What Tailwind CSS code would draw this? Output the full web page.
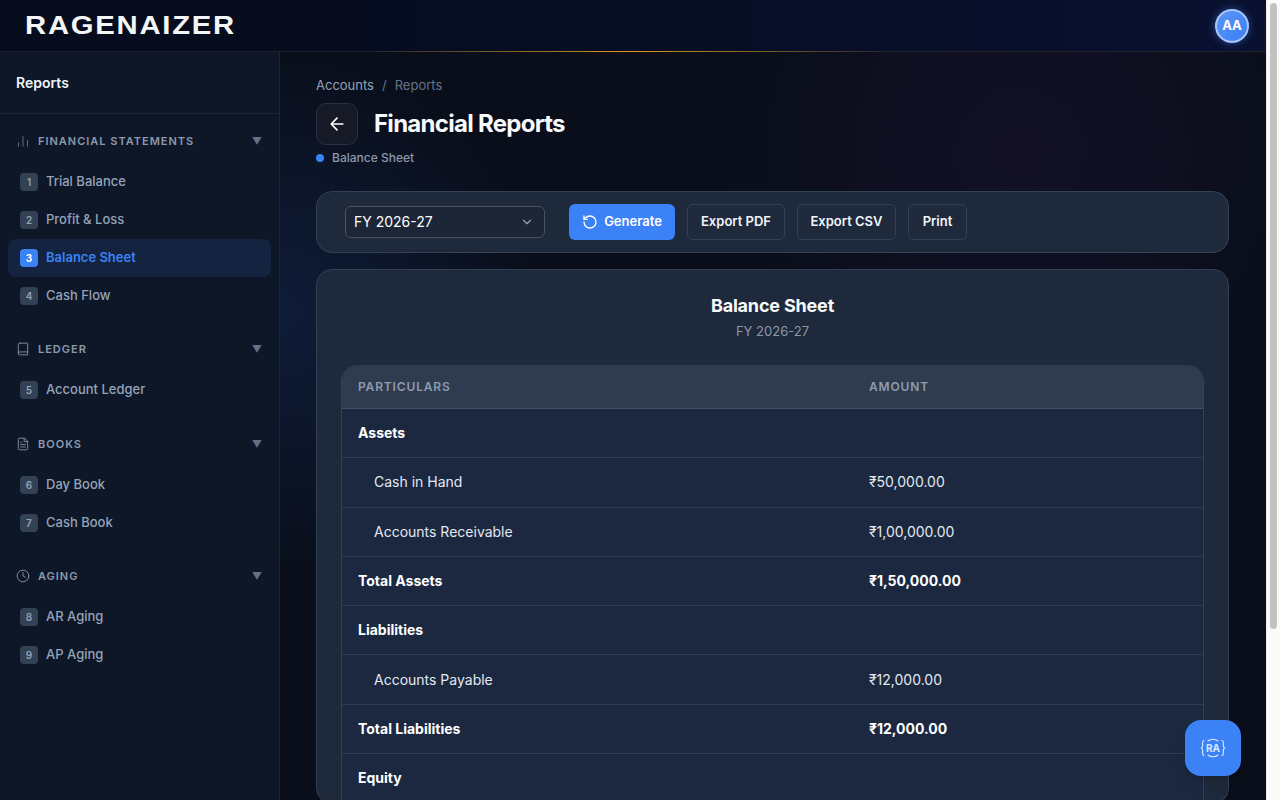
<!DOCTYPE html>
<html lang="en">
<head>
    <meta charset="UTF-8">
    <title>Financial Reports</title>
    <script src="https://cdn.jsdelivr.net/npm/@tailwindcss/browser@4"></script>
</head>
<body class="h-screen overflow-hidden flex bg-white font-['Inter',sans-serif] text-white">

    <div class="relative flex-1 min-w-0 flex flex-col h-screen overflow-hidden bg-[#090e1a]">

        <!-- Top bar -->
        <header class="relative h-[52px] shrink-0 flex items-center justify-between pl-[25px] pr-[25px] border-b border-[#20242f] bg-gradient-to-r from-[#060c1c] via-[#070d22] to-[#0a1030]">
            <span class="font-['Liberation_Sans',sans-serif] font-bold text-[25px] leading-none tracking-[0.06em] scale-x-[1.17] origin-left text-[#f4f5f7]">RAGENAIZER</span>
            <div class="w-[34px] h-[34px] rounded-full bg-gradient-to-br from-[#5b96f7] to-[#3b7ef5] border-2 border-[#a9c6f8] shadow-[0_0_8px_rgba(59,130,246,0.5)] flex items-center justify-center text-[13px] font-bold mr-[-8px]">AA</div>
            <div class="absolute left-[370px] bottom-[-1px] w-[520px] h-px bg-gradient-to-r from-transparent via-[#d99a1e] to-transparent"></div>
        </header>

        <div class="flex-1 flex min-h-0">

            <!-- Sidebar -->
            <aside class="w-[280px] shrink-0 bg-[#0e1728] border-r border-[#1e2636]">
                <div class="h-[62px] flex items-center px-4 text-sm font-semibold text-[#f1f5f9] border-b border-[#1c2537]">Reports</div>

                <nav class="pt-[15px]">
                    <!-- Financial statements -->
                    <div class="h-[24px] flex items-center pl-4 pr-4 text-[11px] font-semibold tracking-[0.09em] text-[#8d99ab]">
                        <svg class="w-[14px] h-[14px] mr-2 text-[#5f6b7d]" viewBox="0 0 14 14" fill="none" stroke="currentColor" stroke-width="1"><path d="M2.5 12.5v-4M7 12.5V2M11.5 12.5V6"/></svg>
                        <span class="flex-1">FINANCIAL STATEMENTS</span>
                        <span class="text-[10px] text-[#64707f]">▼</span>
                    </div>
                    <div class="mt-[10px] px-2 flex flex-col">
                        <a class="h-[38px] flex items-center gap-2 px-3 rounded-lg text-[13px] font-medium text-[#94a3b8]"><span class="w-[18px] h-[18px] rounded-[4px] bg-[#334155] flex items-center justify-center text-[10px] font-semibold">1</span>Trial Balance</a>
                        <a class="h-[38px] flex items-center gap-2 px-3 rounded-lg text-[13px] font-medium text-[#94a3b8]"><span class="w-[18px] h-[18px] rounded-[4px] bg-[#334155] flex items-center justify-center text-[10px] font-semibold">2</span>Profit &amp; Loss</a>
                        <a class="h-[38px] flex items-center gap-2 px-3 rounded-lg text-[13px] font-semibold text-[#3b82f6] bg-[#14233f]"><span class="w-[18px] h-[18px] rounded-[4px] bg-[#3b82f6] text-white flex items-center justify-center text-[10px] font-bold">3</span>Balance Sheet</a>
                        <a class="h-[38px] flex items-center gap-2 px-3 rounded-lg text-[13px] font-medium text-[#94a3b8]"><span class="w-[18px] h-[18px] rounded-[4px] bg-[#334155] flex items-center justify-center text-[10px] font-semibold">4</span>Cash Flow</a>
                    </div>

                    <!-- Ledger -->
                    <div class="mt-[22px] h-[24px] flex items-center pl-4 pr-4 text-[11px] font-semibold tracking-[0.09em] text-[#8d99ab]">
                        <svg class="w-[14px] h-[14px] mr-2 text-[#7d899a]" viewBox="0 0 24 24" fill="none" stroke="currentColor" stroke-width="1.7" stroke-linecap="round" stroke-linejoin="round"><path d="M4 19.5A2.5 2.5 0 0 1 6.5 17H20"/><path d="M6.5 2H20v20H6.5A2.5 2.5 0 0 1 4 19.5v-15A2.5 2.5 0 0 1 6.5 2z"/></svg>
                        <span class="flex-1">LEDGER</span>
                        <span class="text-[10px] text-[#64707f]">▼</span>
                    </div>
                    <div class="mt-[10px] px-2 flex flex-col">
                        <a class="h-[38px] flex items-center gap-2 px-3 rounded-lg text-[13px] font-medium text-[#94a3b8]"><span class="w-[18px] h-[18px] rounded-[4px] bg-[#334155] flex items-center justify-center text-[10px] font-semibold">5</span>Account Ledger</a>
                    </div>

                    <!-- Books -->
                    <div class="mt-[23px] h-[24px] flex items-center pl-4 pr-4 text-[11px] font-semibold tracking-[0.09em] text-[#8d99ab]">
                        <svg class="w-[14px] h-[14px] mr-2 text-[#7d899a]" viewBox="0 0 24 24" fill="none" stroke="currentColor" stroke-width="1.7" stroke-linecap="round" stroke-linejoin="round"><path d="M14 2H6a2 2 0 0 0-2 2v16a2 2 0 0 0 2 2h12a2 2 0 0 0 2-2V8z"/><path d="M14 2v6h6M16 13H8M16 17H8M10 9H8"/></svg>
                        <span class="flex-1">BOOKS</span>
                        <span class="text-[10px] text-[#64707f]">▼</span>
                    </div>
                    <div class="mt-[10px] px-2 flex flex-col">
                        <a class="h-[38px] flex items-center gap-2 px-3 rounded-lg text-[13px] font-medium text-[#94a3b8]"><span class="w-[18px] h-[18px] rounded-[4px] bg-[#334155] flex items-center justify-center text-[10px] font-semibold">6</span>Day Book</a>
                        <a class="h-[38px] flex items-center gap-2 px-3 rounded-lg text-[13px] font-medium text-[#94a3b8]"><span class="w-[18px] h-[18px] rounded-[4px] bg-[#334155] flex items-center justify-center text-[10px] font-semibold">7</span>Cash Book</a>
                    </div>

                    <!-- Aging -->
                    <div class="mt-[22px] h-[24px] flex items-center pl-4 pr-4 text-[11px] font-semibold tracking-[0.09em] text-[#8d99ab]">
                        <svg class="w-[14px] h-[14px] mr-2 text-[#7d899a]" viewBox="0 0 24 24" fill="none" stroke="currentColor" stroke-width="1.7" stroke-linecap="round" stroke-linejoin="round"><circle cx="12" cy="12" r="10"/><path d="M12 6v6l4 2"/></svg>
                        <span class="flex-1">AGING</span>
                        <span class="text-[10px] text-[#64707f]">▼</span>
                    </div>
                    <div class="mt-[10px] px-2 flex flex-col">
                        <a class="h-[38px] flex items-center gap-2 px-3 rounded-lg text-[13px] font-medium text-[#94a3b8]"><span class="w-[18px] h-[18px] rounded-[4px] bg-[#334155] flex items-center justify-center text-[10px] font-semibold">8</span>AR Aging</a>
                        <a class="h-[38px] flex items-center gap-2 px-3 rounded-lg text-[13px] font-medium text-[#94a3b8]"><span class="w-[18px] h-[18px] rounded-[4px] bg-[#334155] flex items-center justify-center text-[10px] font-semibold">9</span>AP Aging</a>
                    </div>
                </nav>
            </aside>

            <!-- Main -->
            <main class="flex-1 min-w-0 pl-9 pr-[37px] pt-[25px] bg-[radial-gradient(circle_at_740px_100px,rgba(80,30,110,0.14),transparent_300px),radial-gradient(circle_at_0px_260px,rgba(30,64,135,0.28),transparent_260px)]">
                <div class="flex items-center gap-2 text-[13px] leading-4 text-[#94a3b8]">
                    <span>Accounts</span><span class="text-[#64748b]">/</span><span class="text-[#64748b]">Reports</span>
                </div>

                <div class="mt-[10px] flex items-center gap-4">
                    <button class="w-[42px] h-[42px] rounded-[10px] bg-[#151a26] border border-[#2a3040] flex items-center justify-center">
                        <svg class="w-5 h-5" viewBox="0 0 24 24" fill="none" stroke="currentColor" stroke-width="2" stroke-linecap="round" stroke-linejoin="round"><path d="M19 12H5M12 19l-7-7 7-7"/></svg>
                    </button>
                    <h1 class="text-2xl font-bold tracking-[-0.03em] text-[#f8fafc]">Financial Reports</h1>
                </div>

                <div class="mt-[5px] flex items-center gap-2 text-xs font-medium leading-4 text-[#8b98ab]">
                    <span class="w-2 h-2 rounded-full bg-[#3b82f6]"></span>Balance Sheet
                </div>

                <!-- Toolbar -->
                <div class="mt-[25px] h-[62px] rounded-2xl bg-[#1e293b] border border-[#334155] pl-7 flex items-center gap-3">
                    <div class="w-[200px] h-8 mr-3 rounded-md bg-[#1c2636] border border-[#475263] flex items-center justify-between pl-2 pr-[10px] text-sm">
                        <span>FY 2026-27</span>
                        <svg class="w-[14px] h-[14px] text-[#94a3b8]" viewBox="0 0 24 24" fill="none" stroke="currentColor" stroke-width="2" stroke-linecap="round" stroke-linejoin="round"><path d="M6 9l6 6 6-6"/></svg>
                    </div>
                    <button class="w-[106px] h-9 rounded-md bg-[#3b82f6] flex items-center justify-center gap-[6px] text-[13px] font-semibold">
                        <svg class="w-4 h-4" viewBox="0 0 24 24" fill="none" stroke="currentColor" stroke-width="2" stroke-linecap="round" stroke-linejoin="round"><path d="M3 12a9 9 0 1 0 9-9 9.75 9.75 0 0 0-6.74 2.74L3 8"/><path d="M3 3v5h5"/></svg>
                        Generate
                    </button>
                    <button class="w-[98px] h-9 rounded-md border border-[#334155] text-[13px] font-semibold text-[#f1f5f9]">Export PDF</button>
                    <button class="w-[99px] h-9 rounded-md border border-[#334155] text-[13px] font-semibold text-[#f1f5f9]">Export CSV</button>
                    <button class="w-[59px] h-9 rounded-md border border-[#334155] text-[13px] font-semibold text-[#f1f5f9]">Print</button>
                </div>

                <!-- Report card -->
                <div class="mt-4 rounded-2xl bg-[#1e293b] border border-[#334155] px-6 pt-[24px]">
                    <div class="text-center">
                        <h2 class="text-lg font-bold leading-6 tracking-[-0.01em] text-[#f8fafc]">Balance Sheet</h2>
                        <p class="mt-[5px] text-[13px] leading-4 text-[#8b98ab]">FY 2026-27</p>
                    </div>

                    <div class="mt-[26px] rounded-t-2xl border-x border-[#334155] bg-[#1b2840] text-sm">
                        <div class="h-[44px] grid grid-cols-[511px_1fr] items-center rounded-t-2xl bg-[#2f3b4f] border-b border-[#45536a] text-xs font-semibold tracking-[0.07em] text-[#8d9bb0]">
                            <div class="pl-4">PARTICULARS</div><div class="pl-4">AMOUNT</div>
                        </div>
                        <div class="h-[49.3px] grid grid-cols-[511px_1fr] items-center border-b border-[#2e3a4f] font-bold"><div class="pl-4">Assets</div><div class="pl-4"></div></div>
                        <div class="h-[49.3px] grid grid-cols-[511px_1fr] items-center border-b border-[#2e3a4f] text-[#e2e8f0]"><div class="pl-8">Cash in Hand</div><div class="pl-4">₹50,000.00</div></div>
                        <div class="h-[49.3px] grid grid-cols-[511px_1fr] items-center border-b border-[#2e3a4f] text-[#e2e8f0]"><div class="pl-8">Accounts Receivable</div><div class="pl-4">₹1,00,000.00</div></div>
                        <div class="h-[49.3px] grid grid-cols-[511px_1fr] items-center border-b border-[#2e3a4f] font-bold"><div class="pl-4">Total Assets</div><div class="pl-4">₹1,50,000.00</div></div>
                        <div class="h-[49.3px] grid grid-cols-[511px_1fr] items-center border-b border-[#2e3a4f] font-bold"><div class="pl-4">Liabilities</div><div class="pl-4"></div></div>
                        <div class="h-[49.3px] grid grid-cols-[511px_1fr] items-center border-b border-[#2e3a4f] text-[#e2e8f0]"><div class="pl-8">Accounts Payable</div><div class="pl-4">₹12,000.00</div></div>
                        <div class="h-[49.3px] grid grid-cols-[511px_1fr] items-center border-b border-[#2e3a4f] font-bold"><div class="pl-4">Total Liabilities</div><div class="pl-4">₹12,000.00</div></div>
                        <div class="h-[49.3px] grid grid-cols-[511px_1fr] items-center border-b border-[#2e3a4f] font-bold"><div class="pl-4">Equity</div><div class="pl-4"></div></div>
                    </div>
                </div>
            </main>
        </div>

        <!-- Floating assistant button -->
        <button class="absolute right-[25px] bottom-6 w-14 h-14 rounded-2xl bg-[#3b82f6] shadow-lg flex items-center justify-center text-[#dbe8ff] text-[11px] font-bold">
            <svg class="w-[26px] h-[22px]" viewBox="0 0 26 22" fill="none" stroke="currentColor" stroke-width="1.1" stroke-linecap="round" stroke-linejoin="round">
                <path d="M4 3.5C2.6 3.5 2.6 4.5 2.6 6.5V9c0 1-.4 1.7-1.4 2 1 .3 1.4 1 1.4 2v2.5c0 2 0 3 1.4 3"/>
                <path d="M22 3.5c1.4 0 1.4 1 1.4 3V9c0 1 .4 1.7 1.4 2-1 .3-1.4 1-1.4 2v2.5c0 2 0 3-1.4 3"/>
                <path d="M8 4c1.4-1.2 3-1.8 5-1.8S16.600 2.800 18 4M8 18c1.400 1.200 3 1.800 5 1.800s3.600-.6 5-1.800"/>
                <text x="13" y="14.500" text-anchor="middle" font-size="10" font-weight="700" fill="currentColor" stroke="none" font-family="Inter, sans-serif">RA</text>
            </svg>
        </button>
    </div>

    <!-- Scrollbar -->
    <div class="w-[14px] h-screen shrink-0 bg-[#fafafa] border-l border-[#ececec] pt-[3px] px-[3px]">
        <div class="h-[626px] rounded-full bg-[#c2c2c2]"></div>
    </div>

</body>
</html>
